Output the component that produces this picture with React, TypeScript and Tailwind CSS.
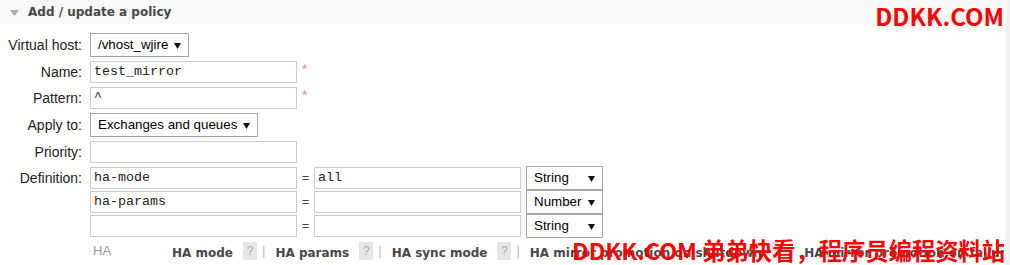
import React from 'react'

const sans = { fontFamily: '"Liberation Sans", Arial, sans-serif' }
const verdana = { fontFamily: '"DejaVu Sans", Verdana, sans-serif' }
const mono = { fontFamily: '"Liberation Mono", "Courier New", monospace' }
const cjk = { fontFamily: '"Noto Sans CJK SC", "Noto Sans", sans-serif' }

const Arrow = () => (
  <svg width="7" height="7" viewBox="0 0 7 7" className="shrink-0">
    <polygon points="0,1 7,1 3.5,7" fill="#111" />
  </svg>
)

const Select = ({ value, width }: { value: string; width: string }) => (
  <div
    className={`flex h-[24px] items-center justify-between border border-[#a6a6a6] bg-white pl-[7px] pr-[7px] text-[13.33px] text-black ${width}`}
    style={sans}
  >
    <span>{value}</span>
    <Arrow />
  </div>
)

const Input = ({ value = '' }: { value?: string }) => (
  <div
    className="flex h-[22px] w-[207px] items-center border border-[#cccccc] bg-white px-[3px] text-[13.33px] text-[#222]"
    style={mono}
  >
    {value}
  </div>
)

const Label = ({ children }: { children: React.ReactNode }) => (
  <div className="w-[82px] shrink-0 text-right text-[14px] text-[#222]" style={sans}>
    {children}
  </div>
)

const Star = () => (
  <span className="ml-[5px] self-start pt-[1px] text-[14px] leading-[14px] text-[#f58a8a]" style={sans}>
    *
  </span>
)

const Help = () => (
  <span
    className="ml-[10px] mr-[5px] flex h-[18px] w-[14px] shrink-0 items-center justify-center bg-[#e6e6e6] text-[12px] text-[#aaa]"
    style={sans}
  >
    ?
  </span>
)

const Sep = () => <span className="mr-[10px] shrink-0 text-[13px] text-[#bbb]" style={sans}>|</span>

const DefRow = ({ k, v, type }: { k: string; v: string; type: string }) => (
  <div className="flex items-center">
    <Input value={k} />
    <span className="w-[17px] text-center text-[13px] text-[#444]" style={sans}>=</span>
    <Input value={v} />
    <div className="ml-[5px]">
      <Select value={type} width="w-[77px] -my-[1px]" />
    </div>
  </div>
)

const helpItems = ['HA mode', 'HA params', 'HA sync mode', 'HA mirror promotion on shutdown', 'HA mirror promotion on failure']

export default function App() {
  return (
    <div className="flex h-[265px] w-[1010px] overflow-hidden bg-white">
      <div className="relative min-w-0 flex-1 overflow-hidden">
        <div className="flex h-[24px] items-center bg-[#f8f8f8] pl-[10px]">
          <svg width="9" height="6" viewBox="0 0 9 6" className="mt-[1px]">
            <polygon points="0,0 9,0 4.5,6" fill="#aaaaaa" />
          </svg>
          <span className="ml-[9px] text-[12px] font-bold text-[#484848]" style={verdana}>
            Add / update a policy
          </span>
          <span className="ml-auto mr-0 self-start pt-[4px] text-[24px] font-bold leading-none text-[#ff0000]" style={cjk}>
            DDKK.COM
          </span>
        </div>

        <div className="flex flex-col pt-[9px]">
          <div className="flex items-center gap-[8px]">
            <Label>Virtual host:</Label>
            <Select value="/vhost_wjire" width="w-[99px]" />
          </div>
          <div className="mt-[4px] flex items-center gap-[8px]">
            <Label>Name:</Label>
            <div className="flex">
              <Input value="test_mirror" />
              <Star />
            </div>
          </div>
          <div className="mt-[4px] flex items-center gap-[8px]">
            <Label>Pattern:</Label>
            <div className="flex">
              <Input value="^" />
              <Star />
            </div>
          </div>
          <div className="mt-[4px] flex items-center gap-[8px]">
            <Label>Apply to:</Label>
            <Select value="Exchanges and queues" width="w-[168px]" />
          </div>
          <div className="mt-[4px] flex items-center gap-[8px]">
            <Label>Priority:</Label>
            <Input />
          </div>
          <div className="mt-[4px] flex items-start gap-[8px]">
            <div className="flex h-[22px] items-center">
              <Label>Definition:</Label>
            </div>
            <div className="flex flex-col gap-[2px]">
              <DefRow k="ha-mode" v="all" type="String" />
              <DefRow k="ha-params" v="" type="Number" />
              <DefRow k="" v="" type="String" />
            </div>
          </div>
          <div className="mt-[2px] flex items-center pl-[93px]">
            <span className="w-[79px] shrink-0 self-start pt-[2px] text-[13px] text-[#999]" style={sans}>HA</span>
            <div className="flex shrink-0 items-center whitespace-nowrap">
              {helpItems.map((h, i) => (
                <React.Fragment key={h}>
                  <span className="shrink-0 pt-[5px] text-[12px] font-bold text-[#484848]" style={verdana}>{h}</span>
                  <Help />
                  {i < helpItems.length - 1 && <Sep />}
                </React.Fragment>
              ))}
            </div>
          </div>
        </div>

        <div
          className="absolute left-[572px] top-[239px] whitespace-nowrap text-[23.3px] font-bold leading-none text-[#ff0000]"
          style={cjk}
        >
          DDKK.COM 弟弟快看，程序员编程资料站
        </div>
      </div>
      <div className="w-[6px] bg-gradient-to-r from-[#fbfbfb] to-[#ebebeb]" />
    </div>
  )
}
